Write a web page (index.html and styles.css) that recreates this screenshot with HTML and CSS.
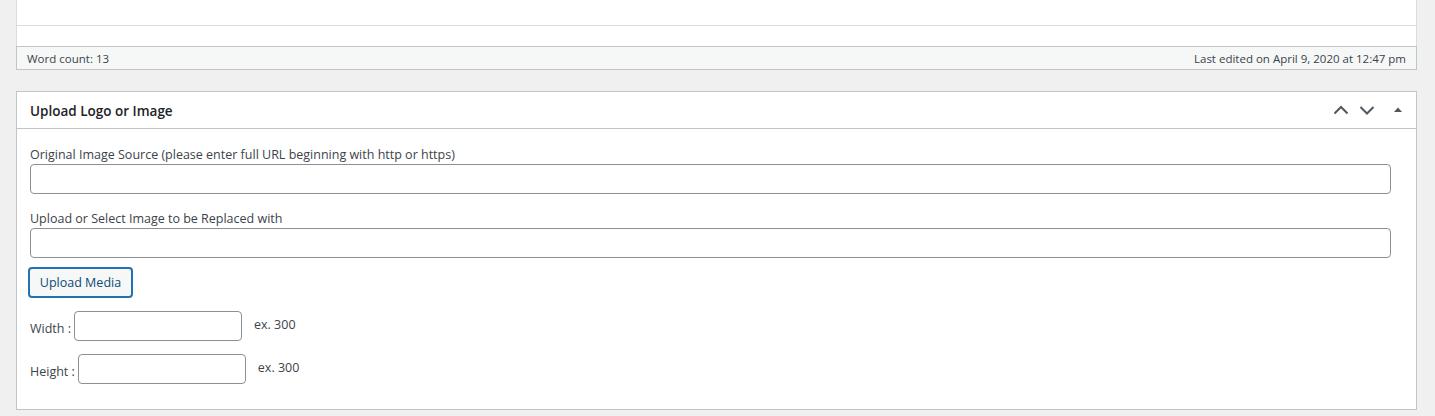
FILE: index.html
```html
<!DOCTYPE html>
<html>
<head>
<meta charset="utf-8">
<link rel="stylesheet" href="styles.css">
</head>
<body>
<div class="wrap">
  <div class="editor">
    <div class="editor-top"></div>
    <div class="editor-gap"></div>
    <div class="statusbar">
      <span>Word count: 13</span>
      <span>Last edited on April 9, 2020 at 12:47 pm</span>
    </div>
  </div>

  <div class="postbox">
    <div class="postbox-header">
      <h2 class="postbox-title">Upload Logo or Image</h2>
      <div class="handle-actions">
        <svg class="hicon" width="20" height="20" viewBox="0 0 20 20"><path d="M3.5 13.5 L10 7 L16.5 13.5" fill="none" stroke="#50575e" stroke-width="2"/></svg>
        <svg class="hicon" width="20" height="20" viewBox="0 0 20 20"><path d="M3.5 7 L10 13.5 L16.5 7" fill="none" stroke="#50575e" stroke-width="2"/></svg>
        <svg class="hicon toggle" width="20" height="20" viewBox="0 0 20 20"><path d="M6 12 L10 7.5 L14 12 Z" fill="#50575e"/></svg>
      </div>
    </div>
    <div class="inside">
      <div class="field">
        <label class="lbl">Original Image Source (please enter full URL beginning with http or https)</label>
        <input class="txt" type="text">
      </div>
      <div class="field">
        <label class="lbl">Upload or Select Image to be Replaced with</label>
        <input class="txt" type="text">
      </div>
      <button class="btn">Upload Media</button>
      <div class="dim-row">
        <span class="dlbl">Width :</span>
        <input class="small" type="text">
        <span class="hint">ex. 300</span>
      </div>
      <div class="dim-row">
        <span class="dlbl">Height :</span>
        <input class="small" type="text">
        <span class="hint">ex. 300</span>
      </div>
    </div>
  </div>
</div>
</body>
</html>
```

FILE: styles.css
```css
html, body {
  margin: 0;
  padding: 0;
  background: #f0f0f1;
  font-family: "Open Sans", "Noto Sans", sans-serif;
  color: #3c434a;
}
.wrap {
  padding: 0 18px 0 16px;
}
.editor {
  background: #fff;
  border-left: 1px solid #dcdcde;
  border-right: 1px solid #dcdcde;
}
.editor-top {
  height: 25px;
  border-bottom: 1px solid #dcdcde;
}
.editor-gap {
  height: 20px;
}
.statusbar {
  height: 22px;
  border-top: 1px solid #c3c4c7;
  border-bottom: 1px solid #c3c4c7;
  background: #f6f7f7;
  display: flex;
  justify-content: space-between;
  align-items: center;
  padding: 0 10px 0 10px;
  font-size: 11.5px;
  color: #3c434a;
  margin-left: -1px;
  margin-right: -1px;
  border-left: 1px solid #c3c4c7;
  border-right: 1px solid #c3c4c7;
}
.postbox {
  margin-top: 21px;
  background: #fff;
  border: 1px solid #c3c4c7;
  height: 319px;
  box-sizing: border-box;
}
.postbox-header {
  height: 36px;
  border-bottom: 1px solid #c3c4c7;
  display: flex;
  align-items: center;
  justify-content: space-between;
  padding: 0 8px 0 13px;
}
.postbox-title {
  margin: 0;
  font-size: 13.5px;
  font-weight: 600;
  color: #1d2327;
  padding-top: 1px;
}
.handle-actions {
  display: flex;
  align-items: center;
  gap: 6px;
}
.hicon { display: block; }
.toggle { margin-left: 5px; }
.inside {
  padding: 17px 25px 0 13px;
}
.field { margin-bottom: 9px; }
.lbl {
  display: block;
  font-size: 12.5px;
  line-height: 18px;
  margin-bottom: 0;
}
.txt {
  display: block;
  width: 100%;
  box-sizing: border-box;
  height: 30px;
  border: 1px solid #8c8f94;
  border-radius: 4px;
  margin: 0;
  padding: 0 8px;
}
.field:nth-child(2) { margin-top: 16px; margin-bottom: 9px; }
.btn {
  display: block;
  margin-left: -2px;
  width: 105px;
  height: 31px;
  box-sizing: border-box;
  background: #f6f7f7;
  border: 2px solid #2271b1;
  border-radius: 4px;
  color: #0a4b78;
  font-family: "Open Sans", "Noto Sans", sans-serif;
  font-size: 12.5px;
  padding: 0;
}
.dim-row {
  display: flex;
  align-items: center;
  margin-top: 13px;
  height: 30px;
}
.dim-row + .dim-row { margin-top: 13px; }
.dlbl {
  font-size: 12.5px;
  margin-right: 3px;
  padding-top: 4px;
}
.small {
  width: 168px;
  height: 30px;
  box-sizing: border-box;
  border: 1px solid #8c8f94;
  border-radius: 4px;
  margin: 0;
}
.hint {
  font-size: 12.5px;
  margin-left: 12px;
  margin-top: -3px;
}
```
